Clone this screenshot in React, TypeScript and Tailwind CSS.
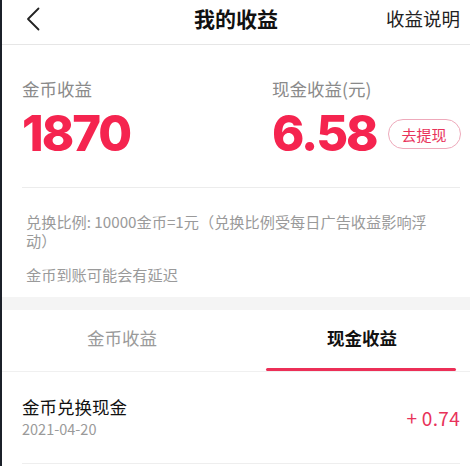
import React from 'react';

const cjk = "font-['Noto_Sans_CJK_SC','Noto_Sans',sans-serif]";
const num = "font-['Inter','Noto_Sans_CJK_SC',sans-serif]";

export default function App() {
  return (
    <div className={`w-[470px] h-[466px] overflow-hidden bg-white border-l-2 border-[#1b2029] ${cjk}`}>
      {/* 顶部导航 */}
      <div className="relative h-[45px] flex items-center justify-center border-b border-[#e6e6e6]">
        <svg className="absolute left-[23px] top-[7px]" width="16" height="24" viewBox="0 0 16 24" fill="none">
          <path d="M13.5 1.5 L3 12 L13.5 22.5" stroke="#222" strokeWidth="1.8" strokeLinecap="round" strokeLinejoin="round" />
        </svg>
        <span className="text-[21px] font-bold text-[#111] leading-none -mt-[7px]">我的收益</span>
        <span className="absolute right-[10px] top-[6px] text-[18.5px] text-[#222] leading-[24px]">收益说明</span>
      </div>

      {/* 收益数字 */}
      <div className="pt-[32px] pl-[20px] pr-[10px]">
        <div className="grid grid-cols-[250px_1fr]">
          <div>
            <div className="text-[17.5px] leading-[24px] text-[#8a8a8a]">金币收益</div>
            <div className={`${num} mt-[8px] text-[49px] leading-none font-extrabold tracking-[-2px] text-[#f5244f]`}>1870</div>
          </div>
          <div>
            <div className="text-[17.5px] leading-[24px] text-[#8a8a8a]">现金收益(元)</div>
            <div className="mt-[8px] flex items-center">
              <span className={`${num} text-[49px] leading-none font-extrabold tracking-[-2px] text-[#f5244f]`}>6.58</span>
              <button className="ml-[11px] mt-[1px] w-[73px] h-[30px] rounded-full border border-[#eeaabb] text-[15px] leading-none text-[#e8325a]">
                去提现
              </button>
            </div>
          </div>
        </div>
        <div className="mt-[29px] border-b border-[#ececec]" />
      </div>

      {/* 说明 */}
      <div className="pt-[24px] pl-[24px] pr-[32px] pb-[13px] text-[15.2px] leading-[19px] text-[#9a9a9a]">
        <p>兑换比例: 10000金币=1元（兑换比例受每日广告收益影响浮动）</p>
        <p className="mt-[15px]">金币到账可能会有延迟</p>
      </div>

      <div className="h-[13px] bg-[#f4f4f4]" />

      {/* 标签页 */}
      <div className="grid grid-cols-[240px_240px] border-b border-[#f0f0f0]">
        <div className="h-[61px] flex items-center justify-center text-[17.5px] text-[#9a9a9a] pb-[4px]">金币收益</div>
        <div className="relative h-[61px] flex items-center justify-center text-[17.5px] font-bold text-[#111] pb-[4px]">
          现金收益
          <div className="absolute bottom-0 left-[24px] w-[190px] h-[3px] rounded-full bg-[#ec2f57]" />
        </div>
      </div>

      {/* 明细 */}
      <div className="mx-[20px] mr-[10px] h-[92px] flex items-center justify-between border-b border-[#eeeeee]">
        <div className="-mt-[2px]">
          <div className="text-[17.5px] leading-[24px] text-[#111]">金币兑换现金</div>
          <div className="text-[14.5px] leading-[20px] text-[#9a9a9a]">2021-04-20</div>
        </div>
        <div className="text-[19px] tracking-[0.3px] text-[#e8325a] pt-[2px]">+ 0.74</div>
      </div>
    </div>
  );
}
